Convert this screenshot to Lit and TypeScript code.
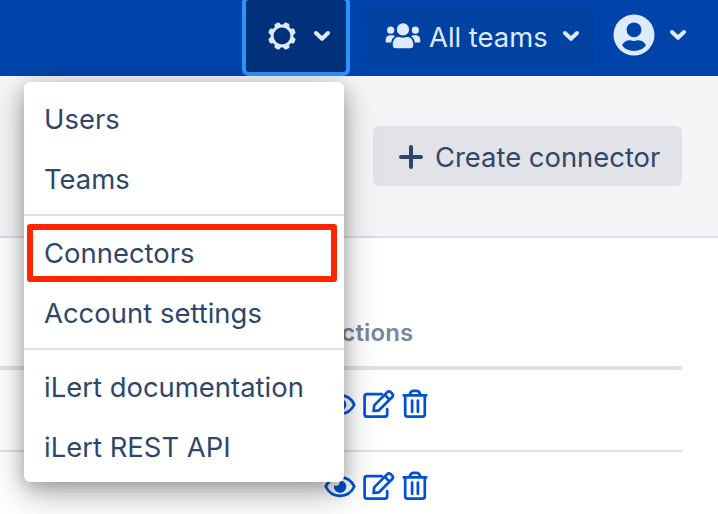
import { LitElement, html, css, svg } from "lit";
import { customElement } from "lit/decorators.js";

const chevron = html`<svg class="chevron" width="18" height="12" viewBox="0 0 18 12">
  <path d="M3 3 L9 8.8 L15 3" />
</svg>`;

const toothAngles = [22.5, 67.5, 112.5, 157.5, 202.5, 247.5, 292.5, 337.5];

const gear = html`<svg class="gear" width="28" height="28" viewBox="-14 -14 28 28">
  <circle r="9.9" />
  ${toothAngles.map(
    (a) => svg`<path transform="rotate(${a})" d="M-3.6 -9.6 L-2.7 -13 Q-2.4 -14 -1.5 -13.9 L1.5 -13.9 Q2.4 -14 2.7 -13 L3.6 -9.6 Z" />`
  )}
</svg>`;

const team = html`<svg class="team" width="36" height="26" viewBox="0 0 36 26">
  <circle cx="18" cy="6.4" r="6.1" />
  <circle cx="5.7" cy="7.2" r="3.6" />
  <circle cx="30.3" cy="7.2" r="3.6" />
  <path d="M7.8 22 C7.8 17.5 10 14 13.6 14 C15 14 15.5 14.7 18 14.7 S21 14 22.4 14 C26 14 28.3 17.5 28.3 22 Q28.3 25.2 25.3 25.2 H10.8 Q7.8 25.2 7.8 22Z" />
  <path d="M0.6 18.6 C0.6 14.4 2 12.3 4.6 12.3 H7.3 Q8.8 12.3 10 13.2 C7.6 14.6 6.7 16.7 6.2 19.5 H1.6 Q0.6 19.5 0.6 18.6Z" />
  <path d="M35.4 18.6 C35.4 14.4 34 12.3 31.4 12.3 H28.7 Q27.2 12.3 26 13.2 C28.4 14.6 29.3 16.7 29.8 19.5 H34.4 Q35.4 19.5 35.4 18.6Z" />
</svg>`;

const avatar = html`<svg width="42" height="42" viewBox="0 0 42 42">
  <circle class="disc" cx="21" cy="21" r="20.5" />
  <circle class="hole" cx="21" cy="15.8" r="7.4" />
  <path class="hole" d="M9 31.2 C10.5 28.5 13 26.3 16 26.3 C18.2 26.3 18.6 27 21 27 S23.8 26.3 26 26.3 C29 26.3 31.5 28.5 33 31.2 C30.3 34.8 25.8 36.9 21 36.9 S11.7 34.8 9 31.2Z" />
</svg>`;

const eye = html`<svg width="32" height="30" viewBox="0 0 32 30">
  <path class="line" d="M1.7 15.5 C4.5 9.6 9.5 6.4 16 6.4 S27.5 9.6 30.3 15.5 C27.5 21.4 22.5 24.9 16 24.9 S4.5 21.4 1.7 15.5Z" />
  <path class="fill" d="M15.4 9.5 A6.2 6.2 0 1 1 10.1 14.2 Q13.7 15.8 15.3 13 Q16 11.5 15.4 9.5Z" />
</svg>`;

const edit = html`<svg width="32" height="30" viewBox="0 0 32 30">
  <path class="line" d="M18.8 5.2 H4 Q1.6 5.2 1.6 7.6 V25.2 Q1.6 27.6 4 27.6 H21.8 Q24.2 27.6 24.2 25.2 V20.2" />
  <path class="line" d="M10.6 22 L11.2 16.4 L24.3 3.1 Q26 1.5 27.7 3.1 L29.2 4.6 Q30.8 6.3 29.2 8 L16 21.3 Z M21.7 5.8 L26.5 10.6" />
</svg>`;

const trash = html`<svg width="26" height="30" viewBox="0 0 26 30">
  <path class="line" d="M1.7 6.4 H24.3 M7.3 6 L9 3 Q9.7 1.8 11 1.8 H15 Q16.3 1.8 17 3 L18.7 6 M3.2 6.4 V25.2 Q3.2 27.6 5.6 27.6 H20.4 Q22.8 27.6 22.8 25.2 V6.4 M10.1 11.5 V22.8 M15.9 11.5 V22.8" />
</svg>`;

@customElement("app-root")
export class AppRoot extends LitElement {
  static styles = css`
    :host {
      display: block;
      position: relative;
      width: 718px;
      height: 514px;
      overflow: hidden;
      background: #fff;
      color: #2f466b;
      font: 27.4px/60px Inter, "Liberation Sans", sans-serif;
      white-space: nowrap;
    }
    *, *::after { box-sizing: border-box; }
    svg { display: block; flex: none; overflow: visible; }
    header {
      display: flex;
      height: 76px;
      padding-left: 242px;
      background: #0044ab;
      color: #deebff;
    }
    .settings {
      display: flex;
      align-items: center;
      width: 108px;
      height: 80px;
      margin-top: -4px;
      padding: 0 0 0 21.5px;
      border: 4px solid #2d94ff;
      border-radius: 7px;
      background: #00317a;
    }
    .settings .chevron { margin-left: 17px; }
    .chevron path { fill: none; stroke: #deebff; stroke-width: 4; stroke-linecap: round; stroke-linejoin: round; }
    .gear circle { fill: none; stroke: #deebff; stroke-width: 3; }
    .gear path, .team { fill: #deebff; }
    .teams {
      display: flex;
      align-items: center;
      width: 229px;
      height: 60px;
      margin: 6px 0 0 16px;
      padding-left: 19px;
      border-radius: 6px;
      background: #0041a1;
    }
    .teams span { margin: 2px 0 0 8px; width: 133px; }
    .profile { display: flex; align-items: center; gap: 14px; height: 70px; margin-left: 18px; }
    .disc { fill: #deebff; }
    .hole { fill: #0044ab; }
    .toolbar {
      display: flex;
      justify-content: flex-end;
      height: 162px;
      padding: 50px 36px 0 0;
      border-bottom: 2px solid #dddee5;
      background: #f4f5f7;
    }
    .create {
      display: flex;
      align-items: center;
      width: 309px;
      height: 60px;
      padding: 2px 0 0 26px;
      border-radius: 6px;
      background: #e2e3e8;
    }
    .create span { margin-left: 12px; }
    .plus path { stroke: #2f466b; stroke-width: 4; stroke-linecap: round; }
    .table { width: 682px; padding-top: 58px; }
    .heading {
      height: 74px;
      padding-left: 324px;
      border-bottom: 4px solid #dfe0e6;
      color: #7a879c;
      font-size: 24px;
      font-weight: 600;
      line-height: 74px;
      letter-spacing: 0.15px;
    }
    .row {
      display: flex;
      align-items: center;
      gap: 7px;
      height: 82px;
      padding: 0 0 12px 324px;
      border-bottom: 2px solid #dfe0e6;
    }
    .row .line { fill: none; stroke: #0052d5; stroke-width: 2.7; stroke-linejoin: round; stroke-linecap: round; }
    .row .fill { fill: #0052d5; }
    .menu {
      position: absolute;
      left: 24px;
      top: 82px;
      width: 320px;
      height: 400px;
      padding-top: 8px;
      border-radius: 6px;
      background: #fff;
      box-shadow: 0 12px 34px rgba(0, 0, 0, 0.3), 0 4px 16px rgba(0, 0, 0, 0.2);
    }
    .item { height: 60px; padding-left: 20px; line-height: 58px; letter-spacing: 0.03px; }
    .separator { height: 2px; margin: 4px 0 8px; background: #dfe0e6; }
    .marked { position: relative; }
    .marked::after {
      content: "";
      position: absolute;
      left: 3px;
      top: 0;
      width: 310px;
      height: 58px;
      border: 6px solid #ff2600;
      border-radius: 3px;
    }
  `;

  render() {
    const row = html`<div class="row">${eye}${edit}${trash}</div>`;
    return html`
      <header>
        <div class="settings">${gear}${chevron}</div>
        <div class="teams">${team}<span>All teams</span>${chevron}</div>
        <div class="profile">${avatar}${chevron}</div>
      </header>
      <section class="toolbar">
        <div class="create">
          <svg class="plus" width="24" height="24" viewBox="0 0 24 24"><path d="M12 2V22M2 12H22" /></svg>
          <span>Create connector</span>
        </div>
      </section>
      <section class="table">
        <div class="heading">Actions</div>
        ${row}${row}
      </section>
      <nav class="menu">
        <div class="item">Users</div>
        <div class="item">Teams</div>
        <div class="separator"></div>
        <div class="item marked">Connectors</div>
        <div class="item">Account settings</div>
        <div class="separator"></div>
        <div class="item">iLert documentation</div>
        <div class="item">iLert REST API</div>
      </nav>
    `;
  }
}
